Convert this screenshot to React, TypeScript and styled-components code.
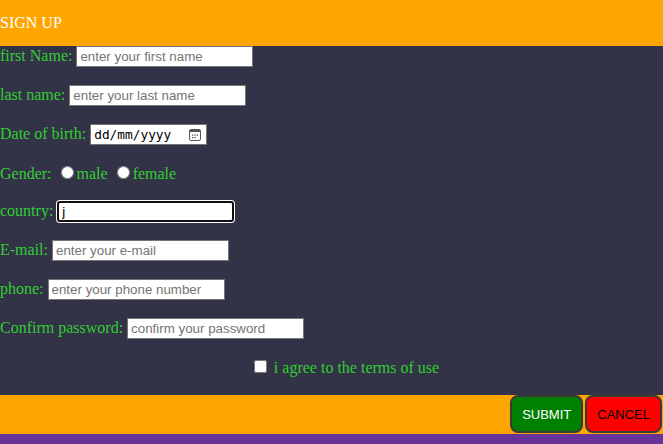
import React from "react";
import styled, { createGlobalStyle } from "styled-components";

const GlobalStyle = createGlobalStyle`
  html, body {
    margin: 0;
    padding: 0;
    background: #663399;
  }
  body {
    font-family: "Liberation Serif", "Times New Roman", serif;
    font-size: 16px;
  }
`;

const Page = styled.div`
  width: 100%;
`;

const Header = styled.header`
  height: 46px;
  background: #ffa500;
  color: #ffffff;
  display: flex;
  align-items: center;
  font-size: 16px;
`;

const FormBody = styled.form`
  height: 349px;
  background: #333348;
  color: #32cd32;
  font-family: "Liberation Serif", "Times New Roman", serif;
  font-size: 16px;
  line-height: normal;
  overflow: hidden;
`;

const Row = styled.div<{ $center?: boolean }>`
  margin-bottom: 18px;
  white-space: nowrap;
  text-align: ${(p) => (p.$center ? "center" : "left")};
  padding-left: ${(p) => (p.$center ? "26px" : "0")};
`;

const Label = styled.label``;

const TextInput = styled.input<{ $focused?: boolean }>`
  box-sizing: border-box;
  width: 177px;
  height: 21px;
  margin: 0;
  padding: 1px 3px;
  font-family: "Liberation Sans", Arial, sans-serif;
  font-size: 13.333px;
  color: #000;
  background: #fff;
  border: ${(p) => (p.$focused ? "2px solid #101010" : "1px solid #767676")};
  border-radius: ${(p) => (p.$focused ? "3px" : "0")};
  box-shadow: ${(p) => (p.$focused ? "0 0 0 1px #ffffff" : "none")};
  outline: none;
  vertical-align: baseline;
  &::placeholder {
    color: #757575;
    opacity: 1;
  }
`;

const DateField = styled.span`
  box-sizing: border-box;
  display: inline-flex;
  align-items: center;
  justify-content: space-between;
  width: 117px;
  height: 21px;
  padding: 0 5px 0 3px;
  background: #fff;
  border: 1px solid #767676;
  vertical-align: baseline;
`;

const DateText = styled.span`
  font-family: "DejaVu Sans Mono", "Liberation Mono", monospace;
  font-size: 12.8px;
  color: #000;
`;

const Choice = styled.input`
  width: 13px;
  height: 13px;
  margin: 3px 3px 0 5px;
  accent-color: #ffffff;
`;

const Check = styled.input`
  width: 13px;
  height: 13px;
  margin: 3px 3px 3px 4px;
`;

const Footer = styled.footer`
  height: 39px;
  background: #ffa500;
  display: flex;
  justify-content: flex-end;
  align-items: flex-start;
  gap: 2px;
  padding-right: 1px;
`;

const ActionButton = styled.button<{ $variant: "submit" | "cancel" }>`
  box-sizing: border-box;
  height: 38px;
  padding: 0 10px;
  font-family: "Liberation Sans", Arial, sans-serif;
  font-size: 13px;
  border: 2px solid #3a3a3a;
  border-radius: 8px;
  background: ${(p) => (p.$variant === "submit" ? "#008000" : "#ff0000")};
  color: ${(p) => (p.$variant === "submit" ? "#ffffff" : "#000000")};
  cursor: pointer;
`;

const CalendarIcon = () => (
  <svg width="12" height="12" viewBox="0 0 12 12" aria-hidden="true">
    <rect x="0.5" y="0.5" width="11" height="11" rx="1.5" fill="none" stroke="#555" />
    <rect x="1" y="1" width="10" height="2" fill="#555" />
    <rect x="3" y="5.5" width="1.3" height="1.3" fill="#555" />
    <rect x="5.4" y="5.5" width="1.3" height="1.3" fill="#555" />
    <rect x="7.8" y="5.5" width="1.3" height="1.3" fill="#555" />
    <rect x="3" y="8" width="1.3" height="1.3" fill="#555" />
    <rect x="5.4" y="8" width="1.3" height="1.3" fill="#555" />
  </svg>
);

export default function App() {
  return (
    <Page>
      <GlobalStyle />
      <Header>SIGN UP</Header>
      <FormBody onSubmit={(e) => e.preventDefault()}>
        <Row>
          <Label>first Name:</Label> <TextInput placeholder="enter your first name" />
        </Row>
        <Row>
          <Label>last name:</Label> <TextInput placeholder="enter your last name" />
        </Row>
        <Row>
          <Label>Date of birth:</Label>{" "}
          <DateField>
            <DateText>dd/mm/yyyy</DateText>
            <CalendarIcon />
          </DateField>
        </Row>
        <Row>
          <Label>Gender:</Label> <Choice type="radio" name="gender" />male{" "}
          <Choice type="radio" name="gender" />female
        </Row>
        <Row>
          <Label>country:</Label> <TextInput $focused defaultValue="j" />
        </Row>
        <Row>
          <Label>E-mail:</Label> <TextInput placeholder="enter your e-mail" />
        </Row>
        <Row>
          <Label>phone:</Label> <TextInput placeholder="enter your phone number" />
        </Row>
        <Row>
          <Label>Confirm password:</Label> <TextInput placeholder="confirm your password" />
        </Row>
        <Row $center>
          <Check type="checkbox" /> i agree to the terms of use
        </Row>
      </FormBody>
      <Footer>
        <ActionButton type="submit" $variant="submit">SUBMIT</ActionButton>
        <ActionButton type="button" $variant="cancel">CANCEL</ActionButton>
      </Footer>
    </Page>
  );
}
